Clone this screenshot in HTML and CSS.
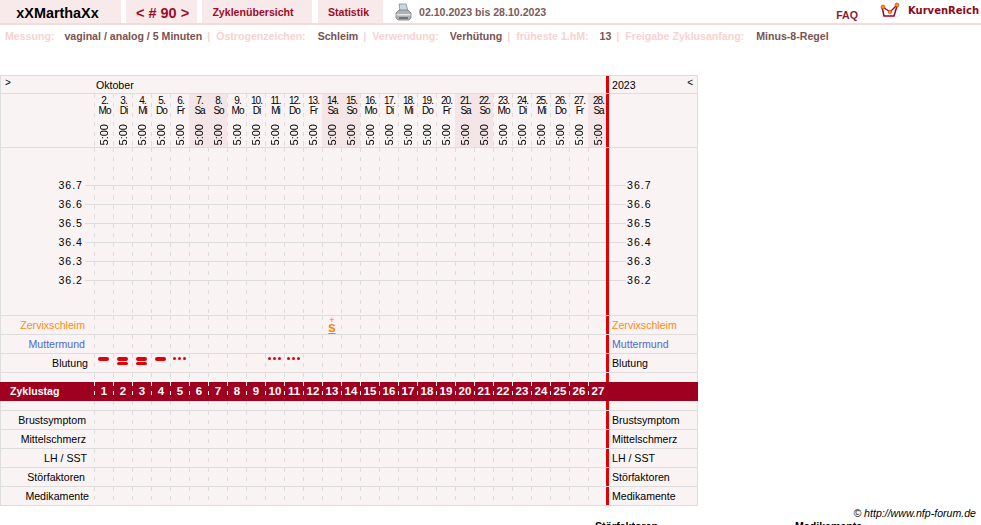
FILE: index.html
```html
<!DOCTYPE html>
<html lang="de">
<head>
<meta charset="utf-8">
<title>Zyklus 90</title>
<link rel="stylesheet" href="styles.css">
</head>
<body>
<header class="top">
  <div class="tab tab-name">xXMarthaXx</div>
  <div class="tab tab-num">&lt; # 90 &gt;</div>
  <div class="tab tab-over">Zyklenübersicht</div>
  <div class="tab tab-stat">Statistik</div>
  <svg class="printer" width="17" height="18" viewBox="0 0 17 18">
    <path d="M4 1h7l2 7H5z" fill="#c9d6e4" stroke="#7f8c99" stroke-width=".8"/>
    <path d="M1 10l3-3h9l3 3v5l-2 2H3l-2-2z" fill="#aeb2b6" stroke="#777c80" stroke-width=".8"/>
    <path d="M1.500 11h14v1.500h-14z" fill="#e4e6e8"/>
    <path d="M4 14h9v2H4z" fill="#6f7478"/>
  </svg>
  <div class="dates">02.10.2023 bis 28.10.2023</div>
  <div class="faq">FAQ</div>
  <svg class="logo" width="20" height="16" viewBox="0 0 20 16">
    <path d="M19 12h1M1 15h18" stroke="#e8e8e8" stroke-width="1"/>
    <path d="M2 5l2 9h10l3-10" fill="none" stroke="#a00020" stroke-width="1.500"/>
    <path d="M3 5l7 5 7-7" fill="none" stroke="#a00020" stroke-width="1.300"/>
    <circle cx="3" cy="5" r="2" fill="#f59a10" stroke="#c03010" stroke-width=".6"/>
    <circle cx="10" cy="10" r="1.800" fill="#f59a10" stroke="#c03010" stroke-width=".6"/>
    <circle cx="17" cy="3" r="2" fill="#f59a10" stroke="#c03010" stroke-width=".6"/>
  </svg>
  <div class="brand">KurvenReich</div>
</header>

<div class="info">
  <span class="lbl l1">Messung:</span><span class="val">vaginal / analog / 5 Minuten</span><span class="sep">|</span>
  <span class="lbl l2">Östrogenzeichen:</span><span class="val">Schleim</span><span class="sep">|</span>
  <span class="lbl l3">Verwendung:</span><span class="val">Verhütung</span><span class="sep">|</span>
  <span class="lbl l4">früheste 1.hM:</span><span class="val">13</span><span class="sep">|</span>
  <span class="lbl l5">Freigabe Zyklusanfang:</span><span class="val">Minus-8-Regel</span>
</div>

<main class="chart">
  <div class="row row-month">
    <div class="label month-l"><span class="arrow">&gt;</span></div>
    <div class="days month-name">Oktober</div>
    <div class="bar"></div>
    <div class="side month-r"><span>2023</span><span class="arrow">&lt;</span></div>
  </div>

  <div class="row row-head">
    <div class="label"></div>
    <div class="days dashed">
      <div class="hd"><b>2.</b><b>Mo</b><i>5:00</i></div>
      <div class="hd"><b>3.</b><b>Di</b><i>5:00</i></div>
      <div class="hd"><b>4.</b><b>Mi</b><i>5:00</i></div>
      <div class="hd"><b>5.</b><b>Do</b><i>5:00</i></div>
      <div class="hd"><b>6.</b><b>Fr</b><i>5:00</i></div>
      <div class="hd we"><b>7.</b><b>Sa</b><i>5:00</i></div>
      <div class="hd we"><b>8.</b><b>So</b><i>5:00</i></div>
      <div class="hd"><b>9.</b><b>Mo</b><i>5:00</i></div>
      <div class="hd"><b>10.</b><b>Di</b><i>5:00</i></div>
      <div class="hd"><b>11.</b><b>Mi</b><i>5:00</i></div>
      <div class="hd"><b>12.</b><b>Do</b><i>5:00</i></div>
      <div class="hd"><b>13.</b><b>Fr</b><i>5:00</i></div>
      <div class="hd we"><b>14.</b><b>Sa</b><i>5:00</i></div>
      <div class="hd we"><b>15.</b><b>So</b><i>5:00</i></div>
      <div class="hd"><b>16.</b><b>Mo</b><i>5:00</i></div>
      <div class="hd"><b>17.</b><b>Di</b><i>5:00</i></div>
      <div class="hd"><b>18.</b><b>Mi</b><i>5:00</i></div>
      <div class="hd"><b>19.</b><b>Do</b><i>5:00</i></div>
      <div class="hd"><b>20.</b><b>Fr</b><i>5:00</i></div>
      <div class="hd we"><b>21.</b><b>Sa</b><i>5:00</i></div>
      <div class="hd we"><b>22.</b><b>So</b><i>5:00</i></div>
      <div class="hd"><b>23.</b><b>Mo</b><i>5:00</i></div>
      <div class="hd"><b>24.</b><b>Di</b><i>5:00</i></div>
      <div class="hd"><b>25.</b><b>Mi</b><i>5:00</i></div>
      <div class="hd"><b>26.</b><b>Do</b><i>5:00</i></div>
      <div class="hd"><b>27.</b><b>Fr</b><i>5:00</i></div>
      <div class="hd we"><b>28.</b><b>Sa</b><i>5:00</i></div>
    </div>
    <div class="bar"></div>
    <div class="side"></div>
  </div>

  <div class="row row-temp">
    <div class="label"></div>
    <div class="days dashed"></div>
    <div class="bar"></div>
    <div class="side"></div>
    <div class="temps">
      <div class="temp"><span class="t-l">36.7</span><span class="t-line"></span><span class="t-r">36.7</span></div>
      <div class="temp"><span class="t-l">36.6</span><span class="t-line"></span><span class="t-r">36.6</span></div>
      <div class="temp"><span class="t-l">36.5</span><span class="t-line"></span><span class="t-r">36.5</span></div>
      <div class="temp"><span class="t-l">36.4</span><span class="t-line"></span><span class="t-r">36.4</span></div>
      <div class="temp"><span class="t-l">36.3</span><span class="t-line"></span><span class="t-r">36.3</span></div>
      <div class="temp"><span class="t-l">36.2</span><span class="t-line"></span><span class="t-r">36.2</span></div>
    </div>
  </div>

  <div class="row">
    <div class="label orange">Zervixschleim</div>
    <div class="days dashed">
      <div class="cell skip12"><span class="mucus"><small>+</small><u>S</u></span></div>
    </div>
    <div class="bar"></div>
    <div class="side orange">Zervixschleim</div>
  </div>
  <div class="row">
    <div class="label blue">Muttermund</div>
    <div class="days dashed"></div>
    <div class="bar"></div>
    <div class="side blue">Muttermund</div>
  </div>
  <div class="row">
    <div class="label pad-a">Blutung</div>
    <div class="days dashed">
      <div class="cell"><span class="dash"></span></div>
      <div class="cell"><span class="dash"></span><span class="dash"></span></div>
      <div class="cell"><span class="dash"></span><span class="dash"></span></div>
      <div class="cell"><span class="dash"></span></div>
      <div class="cell"><span class="dots"><s></s><s></s><s></s></span></div>
      <div class="cell"></div><div class="cell"></div><div class="cell"></div><div class="cell"></div>
      <div class="cell"><span class="dots"><s></s><s></s><s></s></span></div>
      <div class="cell"><span class="dots"><s></s><s></s><s></s></span></div>
    </div>
    <div class="bar"></div>
    <div class="side">Blutung</div>
  </div>

  <div class="row row-gap1">
    <div class="label"></div><div class="days dashed"></div><div class="bar"></div><div class="side"></div>
  </div>

  <div class="row row-band">
    <div class="label band-l">Zyklustag</div>
    <div class="days dashed-w">
      <div class="num">1</div><div class="num">2</div><div class="num">3</div><div class="num">4</div><div class="num">5</div>
      <div class="num">6</div><div class="num">7</div><div class="num">8</div><div class="num">9</div><div class="num">10</div>
      <div class="num">11</div><div class="num">12</div><div class="num">13</div><div class="num">14</div><div class="num">15</div>
      <div class="num">16</div><div class="num">17</div><div class="num">18</div><div class="num">19</div><div class="num">20</div>
      <div class="num">21</div><div class="num">22</div><div class="num">23</div><div class="num">24</div><div class="num">25</div>
      <div class="num">26</div><div class="num">27</div>
    </div>
  </div>

  <div class="row row-gap2">
    <div class="label"></div><div class="days dashed"></div><div class="bar"></div><div class="side"></div>
  </div>

  <div class="row">
    <div class="label pad-b">Brustsymptom</div><div class="days dashed"></div><div class="bar"></div><div class="side">Brustsymptom</div>
  </div>
  <div class="row">
    <div class="label pad-b">Mittelschmerz</div><div class="days dashed"></div><div class="bar"></div><div class="side">Mittelschmerz</div>
  </div>
  <div class="row">
    <div class="label pad-c">LH / SST</div><div class="days dashed"></div><div class="bar"></div><div class="side">LH / SST</div>
  </div>
  <div class="row">
    <div class="label">Störfaktoren</div><div class="days dashed"></div><div class="bar"></div><div class="side">Störfaktoren</div>
  </div>
  <div class="row">
    <div class="label pad-d">Medikamente</div><div class="days dashed"></div><div class="bar"></div><div class="side">Medikamente</div>
  </div>
</main>

<div class="credit">© http://www.nfp-forum.de</div>
<div class="legend"><strong class="leg-a">Störfaktoren</strong><strong class="leg-b">Medikamente</strong></div>
</body>
</html>
```
FILE: styles.css
```css
html, body { margin: 0; padding: 0; background: #fff; }
body {
  width: 981px; height: 525px; overflow: hidden;
  font-family: "Liberation Sans", Arial, sans-serif; font-size: 10.6px; color: #000;
}

/* top bar */
.top {
  display: flex; align-items: flex-start; height: 25px; box-sizing: border-box;
  border-bottom: 2px solid #f5dcdc;
}
.tab {
  height: 23px; background: #f8eaea; text-align: center; font-weight: bold;
  line-height: 24px; color: #a00a28; box-sizing: border-box;
}
.tab-name { width: 121px; padding-right: 6px; margin-right: 5px; color: #000; font-size: 14.4px; line-height: 27px; }
.tab-num { width: 71px; padding-left: 2px; margin-right: 5px; font-size: 14.5px; line-height: 26px; }
.tab-over { width: 110px; padding-right: 8px; margin-right: 6px; }
.tab-stat { width: 65px; padding-right: 4px; }
.printer { margin: 3px 0 0 12px; }
.dates { margin-left: 7px; font-weight: bold; color: #7a5a5a; line-height: 24px; }
.faq { margin-left: auto; margin-top: 3px; font-weight: bold; color: #8a1a30; line-height: 24px; }
.logo { margin: 2px 0 0 22px; }
.brand {
  margin: 0 1px 0 8px; font-family: "DejaVu Sans", sans-serif; font-weight: bold;
  font-size: 10px; line-height: 21px; color: #8a0a20; width: 72px; white-space: nowrap;
}

/* info line */
.info {
  height: 50px; padding: 5px 0 0 5px; box-sizing: border-box; line-height: 13px;
  font-weight: bold; white-space: nowrap; display: flex;
}
.lbl { color: #f8d2d2; }
.val { color: #7a5252; }
.sep { color: #f8d2d2; margin: 0 6px 0 5px; }
.l1 { margin-right: 10px; }
.l2 { margin-right: 12px; }
.l3 { margin-right: 11px; }
.l4 { margin-right: 11px; }
.l5 { margin-right: 12px; }

/* chart */
.chart { width: 698px; border-top: 1px solid #ddd; }
.row {
  display: flex; height: 19px; box-sizing: border-box; position: relative;
  background: #f9f3f3; border-bottom: 1px solid #ddd;
  border-left: 1px solid #ddd; border-right: 1px solid #ddd; line-height: 18px;
}
.label { width: 93px; box-sizing: border-box; padding-right: 9px; text-align: right; flex: none; }
.pad-a { padding-right: 6px; }
.pad-b { padding-right: 8px; }
.pad-c { padding-right: 7px; }
.pad-d { padding-right: 5px; }
.days { width: 512px; box-sizing: border-box; flex: none; display: flex; position: relative; overflow: hidden; }
.bar { width: 3px; flex: none; background: #e00008; position: relative; z-index: 1; }
.side { flex: 1; padding-left: 3px; white-space: nowrap; }

.dashed::before, .dashed-w::before {
  content: ""; position: absolute; inset: 0;
  background: repeating-linear-gradient(90deg, #ddd 0 1px, transparent 1px 19px);
  -webkit-mask: repeating-linear-gradient(180deg, #000 0 4px, transparent 4px 9.5px);
  mask: repeating-linear-gradient(180deg, #000 0 4px, transparent 4px 9.5px);
}
.dashed-w::before { background: repeating-linear-gradient(90deg, #fff 0 1px, transparent 1px 19px); }

.row-month { height: 18px; line-height: 18px; }
.month-l { text-align: left; padding-left: 4px; }
.month-name { padding-left: 2px; }
.month-r { display: flex; justify-content: space-between; padding-right: 4px; }
.arrow { display: block; line-height: 13px; font-size: 10px; }
.row-head { height: 54px; }
.row-temp { height: 168px; }
.row-gap1 { height: 9px; border-bottom: 0; }
.row-gap2 { height: 10px; }

.hd {
  width: 19px; flex: none; position: relative; display: flex; flex-direction: column;
  align-items: center; font-size: 10px; line-height: 10px; letter-spacing: -1px; padding: 2px 0 0 2px;
  box-sizing: border-box;
}
.hd b { font-weight: normal; }
.hd i {
  font-style: normal; font-size: 11px; letter-spacing: 0; writing-mode: vertical-rl;
  transform: rotate(180deg); margin-top: 8px; line-height: 11px;
}
.we { background: #f4e6e6; }

.temps { position: absolute; left: 0; right: 0; top: 28px; display: flex; flex-direction: column; }
.temp { display: flex; height: 19px; align-items: center; line-height: 19px; }
.t-l { width: 82px; text-align: right; letter-spacing: 1px; }
.t-line { width: 541px; height: 1px; background: #ddd; margin: 0 0 0 2px; }
.t-r { letter-spacing: 1px; margin-left: 1px; }

.orange { color: #ff8a14; }
.blue { color: #5068d0; }

.cell { width: 19px; flex: none; position: relative; }
.skip12 { margin-left: 228px; }
.mucus {
  position: absolute; left: 5px; top: 0; width: 10px; text-align: center;
  color: #ff8000; font-weight: bold; display: flex; flex-direction: column; align-items: center;
}
.mucus small { font-size: 9px; font-weight: normal; line-height: 8px; }
.mucus u { font-size: 11px; line-height: 9px; }
.dash {
  display: block; width: 11px; height: 3.5px; margin: 3px 0 0 4px;
  background: #e00008; border-radius: 2px;
}
.dash + .dash { margin-top: 1px; }
.dots { display: flex; gap: 2px; margin: 3px 0 0 3px; }
.dots s { width: 3px; height: 3px; background: #e00008; border-radius: 50%; }

.row-band { background: #a00020; border: 0; height: 19px; margin: 0; color: #fff; padding-left: 1px; line-height: 19px; font-weight: bold; }
.band-l { text-align: left; padding: 0 0 0 9px; }
.num { width: 19px; flex: none; text-align: center; font-size: 11.5px; padding-left: 1px; box-sizing: border-box; }

/* footer */
.credit { width: 976px; text-align: right; font-style: italic; line-height: 13px; margin-top: 1px; }
.legend { position: relative; padding-left: 595px; font-weight: bold; line-height: 13px; margin-top: 0; white-space: nowrap; display: flex; }
.leg-a { width: 200px; }
```
